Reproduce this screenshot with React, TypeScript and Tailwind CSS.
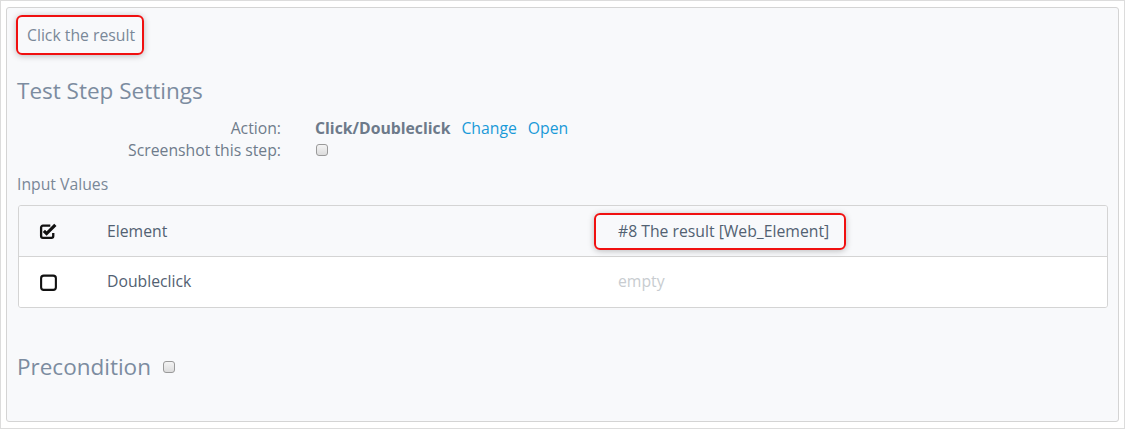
const CheckedIcon = () => (
  <svg width="19" height="17" viewBox="0 0 18 16" className="block">
    <path d="M13.5 9.5v2.8a1.7 1.7 0 0 1-1.7 1.7H3.7A1.7 1.7 0 0 1 2 12.3V4.2a1.7 1.7 0 0 1 1.7-1.7h7" fill="none" stroke="#111" strokeWidth="2.2" />
    <path d="M4.6 7.4l2.6 2.6 8.3-8.3" fill="none" stroke="#111" strokeWidth="3" strokeLinejoin="miter" />
  </svg>
);

const UncheckedIcon = () => (
  <svg width="19" height="17" viewBox="0 0 18 16" className="block">
    <rect x="2" y="1.5" width="14" height="13.5" rx="2.5" fill="none" stroke="#111" strokeWidth="2" />
  </svg>
);

const SmallBox = () => (
  <span className="inline-block w-[12px] h-[12px] rounded-[3px] border border-[#9a9a9a] bg-gradient-to-b from-[#f4f4f4] to-[#dcdcdc]" />
);

export default function App() {
  return (
    <div className="w-[1125px] h-[429px] bg-white border border-[#dcdcdc] pt-[6px] px-[5px] font-['Open_Sans',sans-serif]">
      <div className="h-[415px] bg-[#f8f9fb] border border-[#d4d4d4] rounded-[3px] pt-[7px] px-[10px]">
        {/* Step title */}
        <div className="-ml-px inline-flex items-center h-[40px] pl-[9px] pr-[7px] pt-[2px] border-2 border-[#f01010] rounded-[6px] shadow-[0_1px_6px_rgba(0,0,0,0.25)] text-[15.75px] text-[#7a8898]">
          Click the result
        </div>

        <h2 className="mt-[21px] text-[22.5px] leading-[30px] text-[#7c8ca0]">Test Step Settings</h2>

        <div className="mt-[11px] text-[15.75px] leading-[22px]">
          <div className="flex">
            <div className="w-[264px] text-right text-[#6f7c8b]">Action:</div>
            <div className="ml-[34px] flex gap-[11px]">
              <span className="font-bold text-[#6d7a8a]">Click/Doubleclick</span>
              <span className="text-[#1a9ad8]">Change</span>
              <span className="text-[#1a9ad8]">Open</span>
            </div>
          </div>
          <div className="flex">
            <div className="w-[264px] text-right text-[#6f7c8b]">Screenshot this step:</div>
            <div className="ml-[35px] flex items-center">
              <SmallBox />
            </div>
          </div>
        </div>

        <div className="mt-[12px] text-[15.75px] leading-[22px] text-[#7a8898]">Input Values</div>

        {/* Input values table */}
        <div className="mt-[10px] ml-px w-[1090px] border border-[#d4d4d4] rounded-[3px] text-[15.75px] text-[#526172] overflow-hidden">
          <div className="flex items-center h-[51px] bg-[#f8f9fb] border-b border-[#d4d4d4]">
            <div className="w-[88px] pl-[20px]"><CheckedIcon /></div>
            <div className="w-[487px] pt-px">Element</div>
            <div className="flex items-center h-[37px] w-[252px] pl-[22px] pt-[2px] border-2 border-[#f01010] rounded-[6px] shadow-[0_1px_6px_rgba(0,0,0,0.25)]">
              #8 The result [Web_Element]
            </div>
          </div>
          <div className="flex items-center h-[50px] bg-white">
            <div className="w-[88px] pl-[20px]"><UncheckedIcon /></div>
            <div className="w-[511px]">Doubleclick</div>
            <div className="text-[#c8ccd0]">empty</div>
          </div>
        </div>

        <div className="mt-[44px] flex items-center gap-[12px]">
          <span className="text-[22.5px] leading-[30px] text-[#7c8ca0]">Precondition</span>
          <SmallBox />
        </div>
      </div>
    </div>
  );
}
